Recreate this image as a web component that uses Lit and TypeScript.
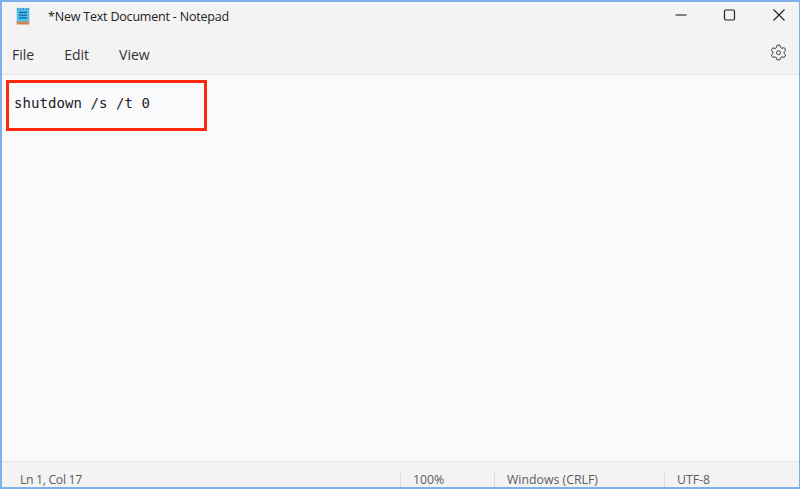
import { LitElement, html, css } from "lit";
import { customElement } from "lit/decorators.js";

@customElement("app-root")
export class AppRoot extends LitElement {
  static styles = css`
    :host { display: block; width: 800px; height: 489px; overflow: hidden; }
    .win {
      box-sizing: border-box; width: 800px; height: 489px;
      border: 2px solid #7fb0ea; border-right-width: 1.5px;
      display: flex; flex-direction: column; background: #f3f3f3;
      font-family: "Open Sans", "Noto Sans", sans-serif; color: #1c1c1c; position: relative;
    }
    .title { height: 28px; display: flex; align-items: center; flex: none; }
    .app-icon { margin-left: 14px; width: 14px; height: 18px; display: block; }
    .doc { margin-left: 18px; font-size: 12.5px; letter-spacing: -0.2px; color: #222; }
    .controls { display: flex; align-items: center; gap: 33px; margin: 0 12px 2px auto; }
    .controls svg { display: block; width: 16px; height: 16px; }
    .menu { height: 45px; display: flex; align-items: center; flex: none; font-size: 14px; color: #333; border-bottom: 1px solid #e6e6e6; box-sizing: border-box; }
    .menu span { margin: 4px 0 0 0; }
    .file { padding-left: 10px; }
    .edit { padding-left: 30px; }
    .view { padding-left: 30px; }
    .gear { margin-left: auto; margin-right: 12px; width: 17px; height: 17px; display: block; }
    .editor { flex: 1; background: #fafafa; padding: 18px 12px; font-family: "DejaVu Sans Mono", monospace; font-size: 14px; letter-spacing: 0.07px; color: #1a1a2a; line-height: 20px; }
    .status { height: 26px; flex: none; display: flex; background: #f3f3f3; border-top: 1px solid #e4e4e4; box-sizing: border-box; font-size: 12.3px; color: #5c5c5c; align-items: flex-end; }
    .cell { height: 16px; line-height: 16px; padding: 1px 0 0 12px; border-left: 1px solid #dedede; box-sizing: border-box; }
    .c1 { width: 398px; border-left: none; padding-left: 18px; letter-spacing: -0.35px; }
    .c2 { width: 94px; }
    .c3 { width: 170px; }
    .c4 { flex: 1; }
    .mark { position: absolute; left: 4px; top: 78px; width: 201px; height: 51px; box-sizing: border-box; border: 3px solid #fb2a0f; }
  `;

  render() {
    return html`
      <div class="win">
        <div class="title">
          <svg class="app-icon" viewBox="0 0 15 20">
            <rect x="0.5" y="1.5" width="14" height="15" fill="#4fc0ec" />
            <rect x="0.5" y="16" width="14" height="3.5" fill="#c88a52" />
            <path d="M2 1v2M5 1v2M8 1v2M11 1v2M13.5 1v2" stroke="#1d6fa8" stroke-width="1" />
            <path d="M3 6h9M3 9h9M3 12h9" stroke="#15629c" stroke-width="1.4" />
          </svg>
          <span class="doc">*New Text Document - Notepad</span>
          <div class="controls">
            <svg viewBox="0 0 16 16"><path d="M2.5 8h11" stroke="#222" stroke-width="1.1" fill="none" /></svg>
            <svg viewBox="0 0 16 16"><rect x="2.5" y="3" width="10" height="10" rx="1.2" stroke="#222" stroke-width="1.2" fill="none" /></svg>
            <svg viewBox="0 0 16 16"><path d="M2.5 2.5l11 11M13.5 2.5l-11 11" stroke="#222" stroke-width="1.1" fill="none" /></svg>
          </div>
        </div>
        <div class="menu">
          <span class="file">File</span><span class="edit">Edit</span><span class="view">View</span>
          <svg class="gear" viewBox="0 0 17 17" fill="none" stroke="#444" stroke-width="1">
            <path d="M7 1.2h3l.5 2.2 1.5.9 2.2-.7 1.5 2.6-1.7 1.5v1.7l1.7 1.5-1.5 2.6-2.2-.7-1.5.9-.5 2.2H7l-.5-2.2-1.5-.9-2.2.7-1.5-2.6 1.7-1.5V7.9L1.3 6.4l1.5-2.6 2.2.7 1.5-.9z" />
            <circle cx="8.5" cy="8.7" r="2" />
          </svg>
        </div>
        <div class="editor">shutdown /s /t 0</div>
        <div class="status">
          <div class="cell c1">Ln 1, Col 17</div>
          <div class="cell c2">100%</div>
          <div class="cell c3">Windows (CRLF)</div>
          <div class="cell c4">UTF-8</div>
        </div>
        <div class="mark"></div>
      </div>
    `;
  }
}
